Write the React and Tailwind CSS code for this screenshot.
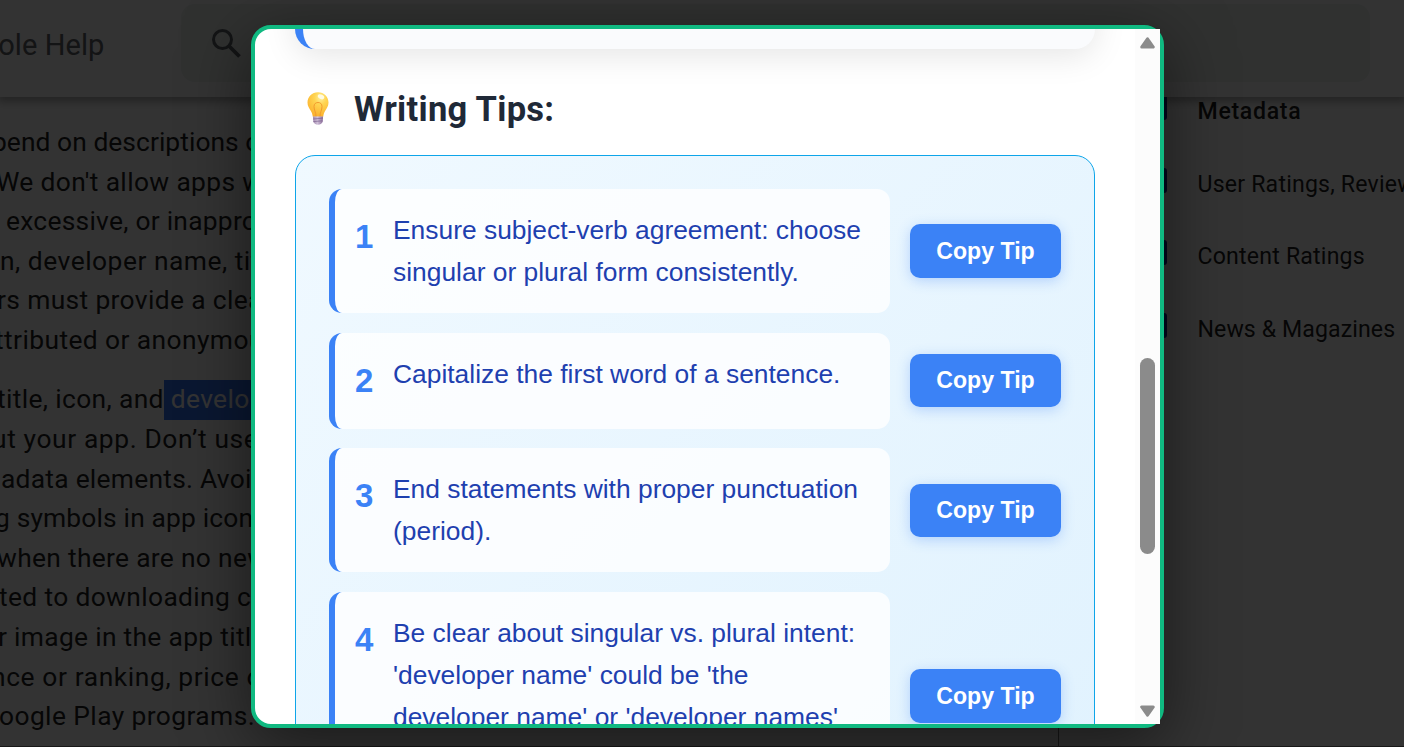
import React from 'react';

const FIRST_PARAGRAPH = [
  ['pend on descriptions of apps', '-ml-[8px] tracking-[0.05px]'],
  ["We don't allow apps with", '-ml-[4px] tracking-[0.35px]'],
  ['excessive, or inappropriate', 'ml-[6px] tracking-[0.25px]'],
  ['n, developer name, title,', 'ml-0 tracking-[0.5px]'],
  ['rs must provide a clear', '-ml-[3px] tracking-[0.35px]'],
  ['ttributed or anonymous', '-ml-[5px] tracking-[0.4px]'],
];

const SECOND_PARAGRAPH_REST = [
  ['ut your app. Don’t use', '-ml-[8px] tracking-[0.6px]'],
  ['adata elements. Avoid', 'ml-[1px] tracking-[0.25px]'],
  ['g symbols in app icons', '-ml-[5px] tracking-[0.15px]'],
  ['when there are no new', '-ml-[3px] tracking-[0.3px]'],
  ['ted to downloading content', '-ml-[1px] tracking-[0.35px]'],
  ['r image in the app title', '-ml-[2px] tracking-[0.3px]'],
  ['nce or ranking, price or', '-ml-[9px] tracking-[0.6px]'],
  ['oogle Play programs.', '-ml-[1px] tracking-[0.4px]'],
];

const TOPICS = [
  ['Metadata', 'font-medium tracking-[0.7px]'],
  ['User Ratings, Reviews', 'tracking-[0.2px]'],
  ['Content Ratings', 'tracking-[0.2px]'],
  ['News & Magazines', 'tracking-[0.1px]'],
];

const TIPS = [
  ['Ensure subject-verb agreement: choose', 'singular or plural form consistently.'],
  ['Capitalize the first word of a sentence.'],
  ['End statements with proper punctuation', '(period).'],
  ['Be clear about singular vs. plural intent:', "'developer name' could be 'the", "developer name' or 'developer names'", 'depending on the context.'],
];

function Line({ text, className }) {
  return <p className={`whitespace-nowrap ${className}`}>{text}</p>;
}

function LightBulb() {
  return (
    <svg viewBox="0 0 22 33" className="relative -top-px h-[33px] w-[22px]">
      <defs>
        <radialGradient id="glass" cx="0.62" cy="0.22" r="0.8">
          <stop offset="0" stopColor="#ffef9a" />
          <stop offset="0.35" stopColor="#ffd552" />
          <stop offset="1" stopColor="#fbb02c" />
        </radialGradient>
        <linearGradient id="cap" x1="0" x2="1">
          <stop offset="0" stopColor="#a58bb0" />
          <stop offset="0.45" stopColor="#cdbdd6" />
          <stop offset="1" stopColor="#8d6f9c" />
        </linearGradient>
      </defs>
      <path d="M11 .3C5 .3.5 4.8.5 10.5c0 3.600 1.700 5.800 3.400 8.400 1 1.600 1.500 3.300 1.900 5.800h10.400c.4-2.500.9-4.200 1.900-5.800 1.700-2.600 3.400-4.800 3.400-8.400C21.500 4.800 17 .3 11 .3z" fill="url(#glass)" />
      <path d="M9 24.500c0-4-2-6.500-2-10 0-2.600 1.700-4 4-4s4 1.400 4 4c0 3.500-2 6-2 10" fill="none" stroke="#f29a2e" strokeWidth="1" />
      <ellipse cx="14" cy="4.800" rx="3.400" ry="2.200" fill="#fffbe2" transform="rotate(25 14 4.800)" />
      <path d="M6 24.500h10l-.3 5.200c-.4 1.300-2.200 3-4.700 3s-4.300-1.700-4.700-3z" fill="url(#cap)" />
      <path d="M6.100 27l9.800-.8M6.300 29.600l9.200-.8" stroke="#7d6390" strokeWidth="0.7" />
    </svg>
  );
}

function HelpPage() {
  return (
    <div className="flex h-full w-full flex-col bg-white font-['Roboto',sans-serif] text-[#1f1f1f]">
      <header className="relative flex h-[97px] shrink-0 items-start bg-white pt-1 shadow-[0_3px_8px_2px_rgba(0,0,0,0.3)]">
        <div className="flex h-[84px] w-[104.500px] items-center justify-end overflow-hidden whitespace-nowrap text-[29px] tracking-[0.1px] text-[#5f6368]">
          Play Console Help
        </div>
        <div className="ml-[76.500px] flex h-[78px] w-[1189px] items-center rounded-[14px] bg-[#edf4f1] pl-[31px]">
          <svg viewBox="0 0 29 29" className="h-[29px] w-[29px]" fill="none" stroke="#5f6368">
            <circle cx="10.500" cy="10.500" r="9" strokeWidth="3" />
            <path d="M17 17l10.500 10.500" strokeWidth="3.800" />
          </svg>
        </div>
      </header>
      <div className="flex min-h-0 flex-1 overflow-hidden border-b border-[#777]">
        <main className="flex w-[1058px] shrink-0 flex-col gap-[19.8px] overflow-hidden pt-[26px] text-[26.4px] leading-[39.6px]">
          <div>
            {FIRST_PARAGRAPH.map(([text, cls]) => <Line key={text} text={text} className={cls} />)}
          </div>
          <div>
            <p className="-ml-[3px] flex whitespace-pre tracking-[0.35px]">
              title, icon, and<span className="bg-[#3273f6] text-white"> developer name</span>
            </p>
            {SECOND_PARAGRAPH_REST.map(([text, cls]) => <Line key={text} text={text} className={cls} />)}
          </div>
        </main>
        <aside className="flex-1 overflow-hidden border-l border-[#777] pl-[84px]">
          <ul className="-mt-[21px]">
            {TOPICS.map(([text, cls]) => (
              <li key={text} className={`flex h-[72.600px] items-center gap-[30.500px] whitespace-nowrap text-[23.1px] ${cls}`}>
                <span className="mb-[9px] h-[25px] w-[24px] shrink-0 rounded-[3px] bg-[#00209a]" />
                {text}
              </li>
            ))}
          </ul>
        </aside>
      </div>
    </div>
  );
}

function Tip({ number, lines }) {
  return (
    <li className="flex items-center gap-[20px]">
      <div className="flex w-[561px] gap-[20px] rounded-[13px] border-l-[6px] border-[#3b82f6] bg-white/80 py-[19.8px] pl-[20px]">
        <span className="w-[18px] pt-[0.4px] text-[33px] leading-[56px] font-bold text-[#3b82f6]">{number}</span>
        <p className="text-[26.4px] leading-[42.24px] whitespace-nowrap text-[#1e40af]">
          {lines.map((line) => <span key={line} className="block">{line}</span>)}
        </p>
      </div>
      <button className="h-[53.500px] w-[151px] rounded-[10px] bg-[#3b82f6] text-[23.1px] font-bold text-white shadow-[0_3px_13px_rgba(59,130,246,0.3)]">
        Copy Tip
      </button>
    </li>
  );
}

function Scrollbar() {
  return (
    <div className="flex w-[25px] shrink-0 flex-col items-center bg-[#fcfcfc] pt-[8px] pb-[7px]">
      <svg viewBox="0 0 15 12" className="h-[12px] w-[15px] shrink-0" fill="#8b8b8b" stroke="#8b8b8b" strokeWidth="3" strokeLinejoin="round">
        <path d="M7.500 1.800L13.300 10H1.700z" />
      </svg>
      <div className="mt-[309px] h-[196px] w-[15px] rounded-full bg-[#8b8b8b]" />
      <svg viewBox="0 0 15 12" className="mt-auto h-[12px] w-[15px] shrink-0" fill="#8b8b8b" stroke="#8b8b8b" strokeWidth="3" strokeLinejoin="round">
        <path d="M7.500 10.200L1.700 2H13.300z" />
      </svg>
    </div>
  );
}

export default function App() {
  return (
    <div className="relative h-[747px] w-[1404px] overflow-hidden">
      <HelpPage />
      <div className="absolute inset-0 bg-black/80 pt-[25px] pl-[251px]">
        <div className="flex h-[703px] w-[913px] rounded-[20px] border-4 border-[#10b981] bg-white font-['Liberation_Sans',Arial,sans-serif] shadow-[0_16px_66px_rgba(0,0,0,0.5)]">
          <div className="h-full w-[880px] overflow-hidden rounded-l-[16px] px-[40px]">
            <div className="-mt-[60px] h-[80px] w-[800px] rounded-[20px] border-l-8 border-[#3b82f6] bg-[#fafbfd] shadow-[0_7px_33px_rgba(0,0,0,0.1)]" />
            <div className="mt-[38px] flex h-[44px] items-center pl-[12px]">
              <LightBulb />
              <h2 className="ml-[25px] pt-[2px] font-['Roboto',sans-serif] text-[34.500px] font-bold tracking-[0.3px] text-[#1f2937]">Writing Tips:</h2>
            </div>
            <ul className="mt-[24px] flex w-[800px] flex-col gap-[19.500px] rounded-[20px] border border-[#0ea5e9] bg-linear-135 from-[#f0f9ff] to-[#e0f2fe] p-[33px] pt-[33.200px]">
              {TIPS.map((lines, i) => <Tip key={lines[0]} number={i + 1} lines={lines} />)}
            </ul>
          </div>
          <Scrollbar />
        </div>
      </div>
    </div>
  );
}
